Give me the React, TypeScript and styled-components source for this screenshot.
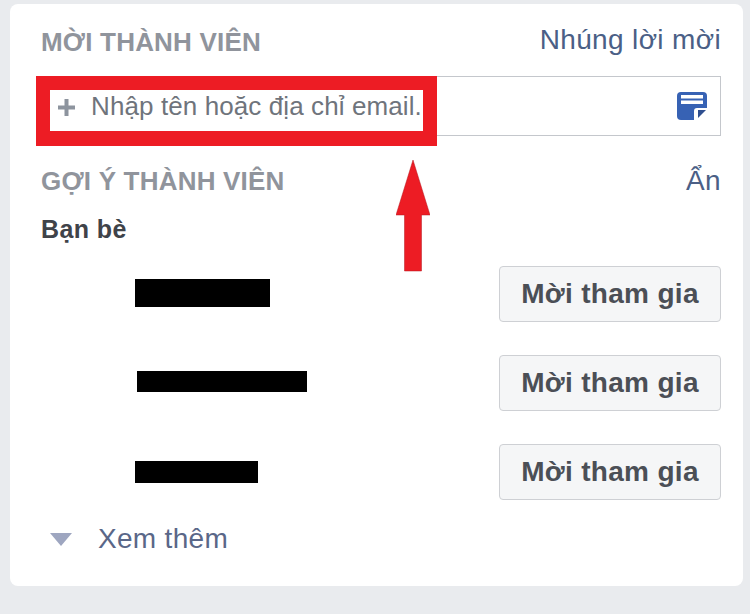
import styled, { createGlobalStyle } from 'styled-components';

const GlobalStyle = createGlobalStyle`
  html, body {
    margin: 0;
    padding: 0;
    background: #e9ebee;
  }
  body {
    font-family: "Liberation Sans", Arial, sans-serif;
    width: 750px;
    height: 614px;
    overflow: hidden;
  }
`;

const Page = styled.div`
  width: 750px;
  height: 614px;
  padding: 4px 7px 28px 10px;
  box-sizing: border-box;
  background: #e9ebee;
`;

const Card = styled.div`
  position: relative;
  height: 100%;
  box-sizing: border-box;
  padding: 19px 22px 0 31px;
  background: #fff;
  border-radius: 8px;
`;

const HeaderRow = styled.div<{ $height: number }>`
  display: flex;
  justify-content: space-between;
  align-items: flex-start;
  height: ${(p) => p.$height}px;
`;

const SectionTitle = styled.h3`
  margin: 4px 0 0;
  font-size: 26px;
  line-height: 30px;
  font-weight: 700;
  letter-spacing: 0.2px;
  color: #90949c;
`;

const HeaderLink = styled.a<{ $top: number }>`
  margin-top: ${(p) => p.$top}px;
  font-size: 28px;
  line-height: 32px;
  letter-spacing: 0.35px;
  color: #4b5f86;
`;

const InviteInput = styled.div`
  display: flex;
  align-items: center;
  height: 60px;
  margin: 0 0 26px -5px;
  padding: 0 13px 0 20px;
  box-sizing: border-box;
  border: 1px solid #c4c7cc;
  background: #fff;
`;

const PlusIcon = styled.svg`
  flex: none;
  width: 19px;
  height: 19px;
  margin-right: 15px;
  margin-top: 3px;
`;

const Placeholder = styled.span`
  flex: 1;
  font-size: 26px;
  letter-spacing: 0.1px;
  color: #6f747c;
`;

const NoteIcon = styled.svg`
  flex: none;
  width: 30px;
  height: 28px;
`;

const FriendsLabel = styled.div`
  margin-top: 14px;
  height: 52px;
  font-size: 25px;
  line-height: 30px;
  font-weight: 700;
  letter-spacing: 0.4px;
  color: #3f4349;
`;

const FriendList = styled.div`
  display: flex;
  flex-direction: column;
  gap: 33px;
`;

const FriendRow = styled.div`
  display: flex;
  justify-content: space-between;
  align-items: center;
  height: 56px;
`;

const RedactedName = styled.div<{ $width: number; $height: number; $left: number; $shift: number }>`
  width: ${(p) => p.$width}px;
  height: ${(p) => p.$height}px;
  margin-left: ${(p) => p.$left}px;
  margin-top: ${(p) => p.$shift}px;
  background: #000;
`;

const InviteButton = styled.button`
  width: 222px;
  height: 56px;
  padding: 0;
  box-sizing: border-box;
  border: 1px solid #ced0d4;
  border-radius: 4px;
  background: #f5f6f7;
  font-family: inherit;
  font-size: 28px;
  font-weight: 700;
  letter-spacing: 0.3px;
  color: #4b4f56;
`;

const MoreRow = styled.div`
  display: flex;
  align-items: center;
  height: 36px;
  margin-top: 21px;
  margin-left: 9px;
`;

const MoreArrow = styled.svg`
  flex: none;
  width: 22px;
  height: 14px;
  margin-right: 26px;
`;

const MoreText = styled.span`
  font-size: 28px;
  letter-spacing: 0.3px;
  color: #5a6788;
`;

const Highlight = styled.div`
  position: absolute;
  left: 26px;
  top: 72px;
  width: 401px;
  height: 70px;
  box-sizing: border-box;
  border: 14px solid #ed1c24;
  border-bottom-width: 15px;
`;

const UpArrow = styled.svg`
  position: absolute;
  left: 386px;
  top: 156px;
  width: 34px;
  height: 112px;
`;

const friends = [
  { width: 135, height: 28, left: 94, shift: -3 },
  { width: 170, height: 21, left: 96, shift: -3 },
  { width: 123, height: 22, left: 94, shift: -1 },
];

export default function App() {
  return (
    <>
      <GlobalStyle />
      <Page>
        <Card>
          <HeaderRow $height={53}>
            <SectionTitle>MỜI THÀNH VIÊN</SectionTitle>
            <HeaderLink $top={1}>Nhúng lời mời</HeaderLink>
          </HeaderRow>
          <InviteInput>
            <PlusIcon viewBox="0 0 19 19">
              <path d="M7.500 1h4v6.500H18v4h-6.500V18h-4v-6.500H1v-4h6.500z" fill="#8d949e" />
            </PlusIcon>
            <Placeholder>Nhập tên hoặc địa chỉ email.</Placeholder>
            <NoteIcon viewBox="0 0 30 28">
              <path
                d="M4 0h22a4 4 0 0 1 4 4v12L18 28H4a4 4 0 0 1-4-4V4a4 4 0 0 1 4-4z"
                fill="#3762b4"
              />
              <rect x="4" y="3" width="22" height="3.500" fill="#fff" />
              <rect x="4" y="8.500" width="22" height="3.500" fill="#fff" />
              <path d="M30 15v2L19 28h-2v-9a3 3 0 0 1 3-3h10z" fill="#fff" />
              <path d="M21 18h8l-8 8z" fill="#2f4f8f" />
            </NoteIcon>
          </InviteInput>
          <HeaderRow $height={38}>
            <SectionTitle>GỢI Ý THÀNH VIÊN</SectionTitle>
            <HeaderLink $top={3}>Ẩn</HeaderLink>
          </HeaderRow>
          <FriendsLabel>Bạn bè</FriendsLabel>
          <FriendList>
            {friends.map((f) => (
              <FriendRow key={f.width}>
                <RedactedName $width={f.width} $height={f.height} $left={f.left} $shift={f.shift} />
                <InviteButton>Mời tham gia</InviteButton>
              </FriendRow>
            ))}
          </FriendList>
          <MoreRow>
            <MoreArrow viewBox="0 0 22 14">
              <path d="M0 1h22L11 14z" fill="#9ea6c0" />
            </MoreArrow>
            <MoreText>Xem thêm</MoreText>
          </MoreRow>
          <Highlight />
          <UpArrow viewBox="0 0 34 112">
            <path d="M17 0l17 55h-8.500v56h-17V55H0z" fill="#ed1c24" stroke="#b5161e" strokeWidth="0.5" />
          </UpArrow>
        </Card>
      </Page>
    </>
  );
}
